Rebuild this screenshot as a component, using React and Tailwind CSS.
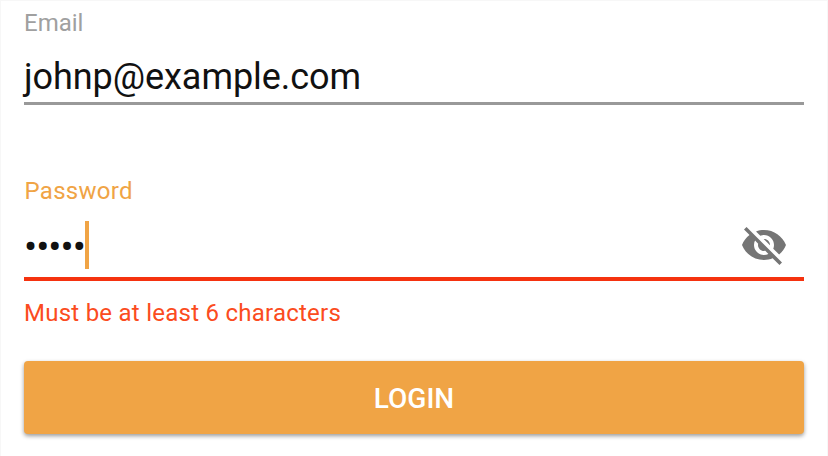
function VisibilityOffIcon() {
  return (
    <svg viewBox="0 0 24 24" className="block h-12 w-12 fill-[#757575]" aria-hidden="true">
      <path d="M12 7c2.76 0 5 2.24 5 5 0 .65-.13 1.26-.36 1.83l2.92 2.92c1.51-1.26 2.7-2.89 3.43-4.75-1.73-4.39-6-7.5-11-7.5-1.4 0-2.74.25-3.98.7l2.16 2.16C10.74 7.13 11.35 7 12 7zM2 4.27l2.28 2.28.46.46C3.08 8.3 1.78 10.02 1 12c1.73 4.39 6 7.5 11 7.5 1.55 0 3.03-.3 4.38-.84l.42.42L19.73 22 21 20.73 3.27 3 2 4.27zM7.53 9.8l1.55 1.55c-.05.21-.08.43-.08.65 0 1.66 1.34 3 3 3 .22 0 .44-.03.65-.08l1.55 1.55c-.67.33-1.41.53-2.2.53-2.76 0-5-2.24-5-5 0-.79.2-1.53.53-2.2zm4.31-.78l3.15 3.15.02-.16c0-1.66-1.34-3-3-3l-.17.01z" />
    </svg>
  );
}

export default function App() {
  return (
    <main className="flex h-[456px] w-[828px] flex-col overflow-hidden border-x border-t border-[#f7f7f7] bg-white px-[23px] font-['Roboto',sans-serif]">
      <div className="flex h-[104px] flex-col border-b-[3px] border-[#999999] pt-2">
        <div className="h-7 text-[24px] leading-7 text-[#a0a0a0]">Email</div>
        <div className="mt-[18px] h-11 text-[36px] leading-[44px] tracking-[-0.06px] text-[#111111]">johnp@example.com</div>
      </div>

      <div className="mt-[72px] flex h-[104px] flex-col border-b-4 border-[#f5320f]">
        <div className="h-7 pl-[0.5px] text-[24px] leading-7 tracking-[0.3px] text-[#f0a445]">Password</div>
        <div className="mt-4 flex h-12 items-center">
          <div className="h-12 w-[61px] pt-[2px] text-[39px] leading-[48px] tracking-[-1px] whitespace-nowrap text-[#111111]">•••••</div>
          <div className="h-12 w-1 bg-[#f0a445]" />
          <div className="mr-4 ml-auto">
            <VisibilityOffIcon />
          </div>
        </div>
      </div>

      <div className="mt-[18px] h-7 text-[24px] leading-7 tracking-[0.25px] text-[#fb4b20]">Must be at least 6 characters</div>

      <button className="mt-[34px] h-[73px] shrink-0 rounded-[4px] bg-[#f0a445] pt-[3px] text-[28px] font-medium text-white shadow-[0_2px_4px_rgba(0,0,0,0.4)]">
        LOGIN
      </button>
    </main>
  );
}
